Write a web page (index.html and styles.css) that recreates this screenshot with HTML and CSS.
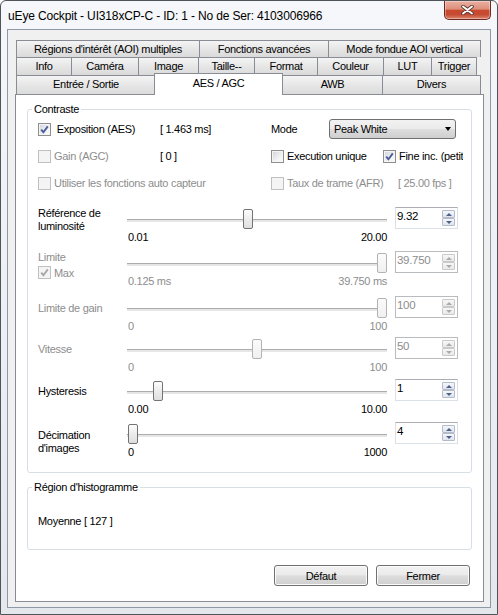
FILE: index.html
```html
<!DOCTYPE html>
<html lang="fr">
  <head>
    <meta charset="UTF-8" />
    <meta name="viewport" content="width=device-width, initial-scale=1.0" />
    <title>uEye Cockpit</title>
    <link rel="stylesheet" href="styles.css">
  </head>

  <body>
    <div class="window">
      <div class="titlebar">
        <span class="title">uEye Cockpit - UI318xCP-C - ID: 1 - No de Ser: 4103006966</span>
        <div class="close-btn">
          <svg width="13" height="10" viewBox="0 0 13 10">
            <path d="M2 1.5 L11 8.5 M11 1.5 L2 8.5" stroke="#5b3a34" stroke-width="3.6" stroke-linecap="round" fill="none" />
            <path d="M2 1.5 L11 8.5 M11 1.5 L2 8.5" stroke="#ffffff" stroke-width="1.8" stroke-linecap="round" fill="none" />
          </svg>
        </div>
      </div>

      <div class="client">
        <div class="tabs">
          <div class="tab-row row-1">
            <div class="tab">Régions d'intérêt (AOI) multiples</div>
            <div class="tab">Fonctions avancées</div>
            <div class="tab">Mode fondue AOI vertical</div>
          </div>
          <div class="tab-row row-2">
            <div class="tab">Info</div>
            <div class="tab">Caméra</div>
            <div class="tab">Image</div>
            <div class="tab">Taille--</div>
            <div class="tab">Format</div>
            <div class="tab">Couleur</div>
            <div class="tab">LUT</div>
            <div class="tab">Trigger</div>
          </div>
          <div class="tab-row row-3">
            <div class="tab">Entrée / Sortie</div>
            <div class="tab active">AES / AGC</div>
            <div class="tab">AWB</div>
            <div class="tab">Divers</div>
          </div>
        </div>

        <div class="pane">
          <fieldset class="group group-contrast">
            <legend>Contraste</legend>

            <div class="opt-row">
              <label class="cell cell-a">
                <span class="cb"><svg class="check" viewBox="0 0 11 11"><path d="M2.2 5.6 L4.4 8.2 L8.8 2.4" /></svg></span>&nbsp;Exposition (AES)
              </label>
              <span class="cell cell-b">[ 1.463 ms]</span>
              <span class="cell mode-label">Mode</span>
              <div class="select">
                <span>Peak White</span>
                <span class="select-arrow"></span>
              </div>
            </div>

            <div class="opt-row">
              <label class="cell cell-a disabled"><span class="cb"></span>Gain (AGC)</label>
              <span class="cell cell-b">[ 0 ]</span>
              <label class="cell cell-c"><span class="cb"></span>Execution unique</label>
              <label class="cell cell-d">
                <span class="cb"><svg class="check" viewBox="0 0 11 11"><path d="M2.2 5.6 L4.4 8.2 L8.8 2.4" /></svg></span>Fine inc. (petit
              </label>
            </div>

            <div class="opt-row">
              <label class="cell cell-ab disabled"><span class="cb"></span>Utiliser les fonctions auto capteur</label>
              <label class="cell cell-c disabled"><span class="cb"></span>Taux de trame (AFR)</label>
              <span class="cell cell-d disabled fps">[ 25.00 fps ]</span>
            </div>

            <div class="slider first">
              <div class="slider-label two-line">Référence de<br>luminosité</div>
              <div class="track"><span class="thumb" style="left: 116px"></span></div>
              <div class="scale"><span>0.01</span><span>20.00</span></div>
              <div class="spin">
                <span class="spin-value">9.32</span>
                <span class="spin-btns"><span class="spin-btn up"></span><span class="spin-btn down"></span></span>
              </div>
            </div>

            <div class="slider disabled gap-6">
              <div class="slider-label limit">
                <div>Limite</div>
                <div class="max-row">
                  <span class="cb"><svg class="check" viewBox="0 0 11 11"><path d="M2.2 5.6 L4.4 8.2 L8.8 2.4" /></svg></span>Max
                </div>
              </div>
              <div class="track"><span class="thumb" style="left: 250px"></span></div>
              <div class="scale"><span>0.125 ms</span><span>39.750 ms</span></div>
              <div class="spin">
                <span class="spin-value">39.750</span>
                <span class="spin-btns"><span class="spin-btn up"></span><span class="spin-btn down"></span></span>
              </div>
            </div>

            <div class="slider disabled gap-7">
              <div class="slider-label">Limite de gain</div>
              <div class="track"><span class="thumb" style="left: 250px"></span></div>
              <div class="scale"><span>0</span><span>100</span></div>
              <div class="spin">
                <span class="spin-value">100</span>
                <span class="spin-btns"><span class="spin-btn up"></span><span class="spin-btn down"></span></span>
              </div>
            </div>

            <div class="slider disabled gap-3">
              <div class="slider-label">Vitesse</div>
              <div class="track"><span class="thumb" style="left: 125px"></span></div>
              <div class="scale"><span>0</span><span>100</span></div>
              <div class="spin">
                <span class="spin-value">50</span>
                <span class="spin-btns"><span class="spin-btn up"></span><span class="spin-btn down"></span></span>
              </div>
            </div>

            <div class="slider gap-4">
              <div class="slider-label">Hysteresis</div>
              <div class="track"><span class="thumb" style="left: 26px"></span></div>
              <div class="scale"><span>0.00</span><span>10.00</span></div>
              <div class="spin">
                <span class="spin-value">1</span>
                <span class="spin-btns"><span class="spin-btn up"></span><span class="spin-btn down"></span></span>
              </div>
            </div>

            <div class="slider">
              <div class="slider-label two-line low">Décimation<br>d'images</div>
              <div class="track"><span class="thumb" style="left: 1px"></span></div>
              <div class="scale"><span>0</span><span>1000</span></div>
              <div class="spin">
                <span class="spin-value">4</span>
                <span class="spin-btns"><span class="spin-btn up"></span><span class="spin-btn down"></span></span>
              </div>
            </div>
          </fieldset>

          <fieldset class="group group-histo">
            <legend>Région d'histogramme</legend>
            <div class="histo-value">Moyenne [ 127 ]</div>
          </fieldset>

          <div class="buttons">
            <button class="btn">Défaut</button>
            <button class="btn">Fermer</button>
          </div>
        </div>
      </div>
    </div>
  </body>
</html>
```

FILE: styles.css
```css
* {
  box-sizing: border-box;
}

body {
  margin: 0;
  background: #ffffff;
  font-family: "Liberation Sans", Arial, sans-serif;
  font-size: 11px;
  letter-spacing: -0.3px;
  color: #000;
}

/* window frame */
.window {
  width: 498px;
  height: 615px;
  border: 1px solid #4f545b;
  border-radius: 6px 6px 0 0;
  background: linear-gradient(#f5f7fa, #e4e8ed);
  padding: 0 6px 6px;
  display: flex;
  flex-direction: column;
}

.titlebar {
  height: 28px;
  display: flex;
  justify-content: space-between;
  align-items: flex-start;
}

.title {
  font-size: 12px;
  letter-spacing: -0.15px;
  line-height: 14px;
  margin: 8px 0 0 1px;
  color: #000;
}

.close-btn {
  width: 47px;
  height: 19px;
  border: 1px solid #6e2a20;
  border-top: none;
  border-radius: 0 0 5px 5px;
  background: linear-gradient(#eab0a2 0%, #de8e7b 45%, #c9492f 52%, #c64a31 75%, #dc866f 100%);
  box-shadow: inset 0 0 0 1px rgba(255, 255, 255, 0.35);
  display: flex;
  align-items: center;
  justify-content: center;
}

.client {
  flex: 1;
  border: 1px solid #8d99a7;
  background: #f0f0f0;
  padding: 10px 6px 5px 7px;
  display: flex;
  flex-direction: column;
}

/* tabs */
.tabs {
  margin-left: 1px;
}

.tab-row {
  display: grid;
}

.row-1 {
  height: 17px;
  grid-template-columns: 183px 129px 152px;
}

.row-2 {
  height: 18px;
  grid-template-columns: 55px 67px 60px 56px 63px 66px 48px 45px;
}

.row-3 {
  height: 19px;
  grid-template-columns: 139px 127px 100px 98px;
}

.tab {
  border: 1px solid #898c95;
  border-bottom: none;
  margin-right: -1px;
  background: linear-gradient(#f4f4f4, #e6e6e6 50%, #dadada);
  text-align: center;
  white-space: nowrap;
  overflow: hidden;
  line-height: 16px;
}

.tab.active {
  position: relative;
  z-index: 1;
  background: #ffffff;
  height: 22px;
  margin: -2px -1px 0 -1px;
  line-height: 19px;
}

.pane {
  flex: 1;
  border: 1px solid #898c95;
  background: #ffffff;
  padding: 0 11px;
}

/* group boxes */
.group {
  margin: 8px 0 0;
  border: 1px solid #d5dfe5;
  border-radius: 3px;
  padding: 3px 10px 12px;
  min-width: 0;
}

.group legend {
  margin-left: -6px;
  padding: 0 2px;
  line-height: 13px;
}

.opt-row {
  display: flex;
  align-items: center;
  height: 20px;
}

.opt-row + .opt-row {
  margin-top: 7px;
}

.cell {
  display: flex;
  align-items: center;
  white-space: nowrap;
  flex: none;
}

.cell-a {
  width: 122px;
}

.cell-b {
  width: 111px;
}

.cell-ab {
  width: 233px;
}

.cell-c {
  width: 112px;
}

.cell-d {
  width: 80px;
  overflow: hidden;
}

.mode-label {
  width: 58px;
}

.fps {
  padding-left: 15px;
}

.disabled,
.disabled .scale,
.disabled .slider-label,
.disabled .spin-value {
  color: #8d8d8d;
}

/* checkbox */
.cb {
  width: 13px;
  height: 13px;
  flex: none;
  margin-right: 3px;
  border: 1px solid #8e8f8f;
  background: linear-gradient(135deg, #cfd3d8, #f1f2f3 60%, #fdfdfd);
  box-shadow: inset 0 0 0 1px #f4f4f4;
  display: flex;
  align-items: center;
  justify-content: center;
}

.disabled .cb {
  border-color: #c0c0c0;
  background: #f4f4f4;
}

.check {
  width: 11px;
  height: 11px;
}

.check path {
  fill: none;
  stroke: #4a5e9c;
  stroke-width: 1.9;
}

.disabled .check path {
  stroke: #a8a8a8;
}

/* dropdown */
.select {
  width: 127px;
  height: 20px;
  border: 1px solid #707070;
  border-radius: 3px;
  background: linear-gradient(#f2f2f2 0%, #ebebeb 48%, #dddddd 52%, #cfcfcf 100%);
  display: flex;
  align-items: center;
  justify-content: space-between;
  padding: 0 4px 0 4px;
}

.select-arrow {
  width: 0;
  height: 0;
  border-left: 3.5px solid transparent;
  border-right: 3.5px solid transparent;
  border-top: 4px solid #000;
}

/* sliders */
.slider {
  display: grid;
  grid-template-columns: 81px 260px 63px;
  grid-template-rows: 22px 16px;
  column-gap: 8px;
  margin-top: 5px;
}

.slider.first {
  margin-top: 14px;
}

.slider.gap-3 {
  margin-top: 3px;
}

.slider.gap-4 {
  margin-top: 4px;
}

.slider.gap-6 {
  margin-top: 6px;
}

.slider.gap-7 {
  margin-top: 7px;
}

.slider-label {
  grid-column: 1;
  grid-row: 1 / 3;
  line-height: 22px;
  padding-top: 1px;
  white-space: nowrap;
}

.slider-label.two-line {
  line-height: 12.5px;
  padding-top: 0;
}

.slider-label.low {
  padding-top: 7px;
}

.slider-label.limit {
  line-height: 12px;
  padding-top: 0;
}

.max-row {
  display: flex;
  align-items: center;
  margin-top: 3px;
  height: 13px;
}

.track {
  grid-column: 2;
  grid-row: 1;
  position: relative;
}

.track::before {
  content: "";
  position: absolute;
  left: 0;
  right: 0;
  top: 12px;
  height: 2px;
  border-top: 1px solid #acacac;
  background: #e6e6e6;
}

.thumb {
  position: absolute;
  top: 2px;
  width: 10px;
  height: 20px;
  border: 1px solid #737373;
  border-radius: 2px;
  background: linear-gradient(#fdfdfd, #ececec 50%, #dedede);
}

.disabled .thumb {
  border-color: #b3b3b3;
  background: linear-gradient(#fbfbfb, #f0f0f0);
}

.scale {
  grid-column: 2;
  grid-row: 2;
  display: flex;
  justify-content: space-between;
  line-height: 16px;
  padding: 0 0 0 1px;
}

/* spin box */
.spin {
  grid-column: 3;
  grid-row: 1;
  display: flex;
  border: 1px solid #dbdfe6;
  border-top-color: #abadb3;
  background: #fff;
}

.disabled .spin {
  border-color: #b9bcbf;
}

.spin-value {
  flex: 1;
  padding: 1px 0 0 1px;
  line-height: 14px;
  font-size: 11.5px;
}

.spin-btns {
  display: flex;
  flex-direction: column;
  width: 13px;
  margin: 2px 2px 0 0;
}

.spin-btn {
  height: 8px;
  border: 1px solid #b4bccb;
  border-radius: 1px;
  background: linear-gradient(#f5f7fa, #dfe4ec);
  display: flex;
  align-items: center;
  justify-content: center;
}

.spin-btn::after {
  content: "";
  width: 0;
  height: 0;
  border-left: 3px solid transparent;
  border-right: 3px solid transparent;
}

.spin-btn.up::after {
  border-bottom: 3px solid #4d5f8c;
}

.spin-btn.down::after {
  border-top: 3px solid #4d5f8c;
}

.disabled .spin-btn {
  border-color: #c9c9c9;
  background: linear-gradient(#f7f7f7, #e9e9e9);
}

.disabled .spin-btn.up::after {
  border-bottom-color: #ababab;
}

.disabled .spin-btn.down::after {
  border-top-color: #ababab;
}

/* histogram group */
.group-histo {
  padding: 20px 10px 21px;
}

.histo-value {
  line-height: 14px;
}

/* bottom buttons */
.buttons {
  display: flex;
  justify-content: flex-end;
  gap: 8px;
  margin: 15px 2px 0 0;
}

.btn {
  width: 94px;
  height: 21px;
  border: 1px solid #707070;
  border-radius: 3px;
  background: linear-gradient(#f2f2f2 0%, #ebebeb 45%, #dddddd 52%, #cfcfcf 100%);
  box-shadow: inset 0 0 0 1px #fbfbfb;
  font-family: "Liberation Sans", Arial, sans-serif;
  font-size: 11px;
  letter-spacing: -0.3px;
  color: #000;
  padding: 0;
}
```
